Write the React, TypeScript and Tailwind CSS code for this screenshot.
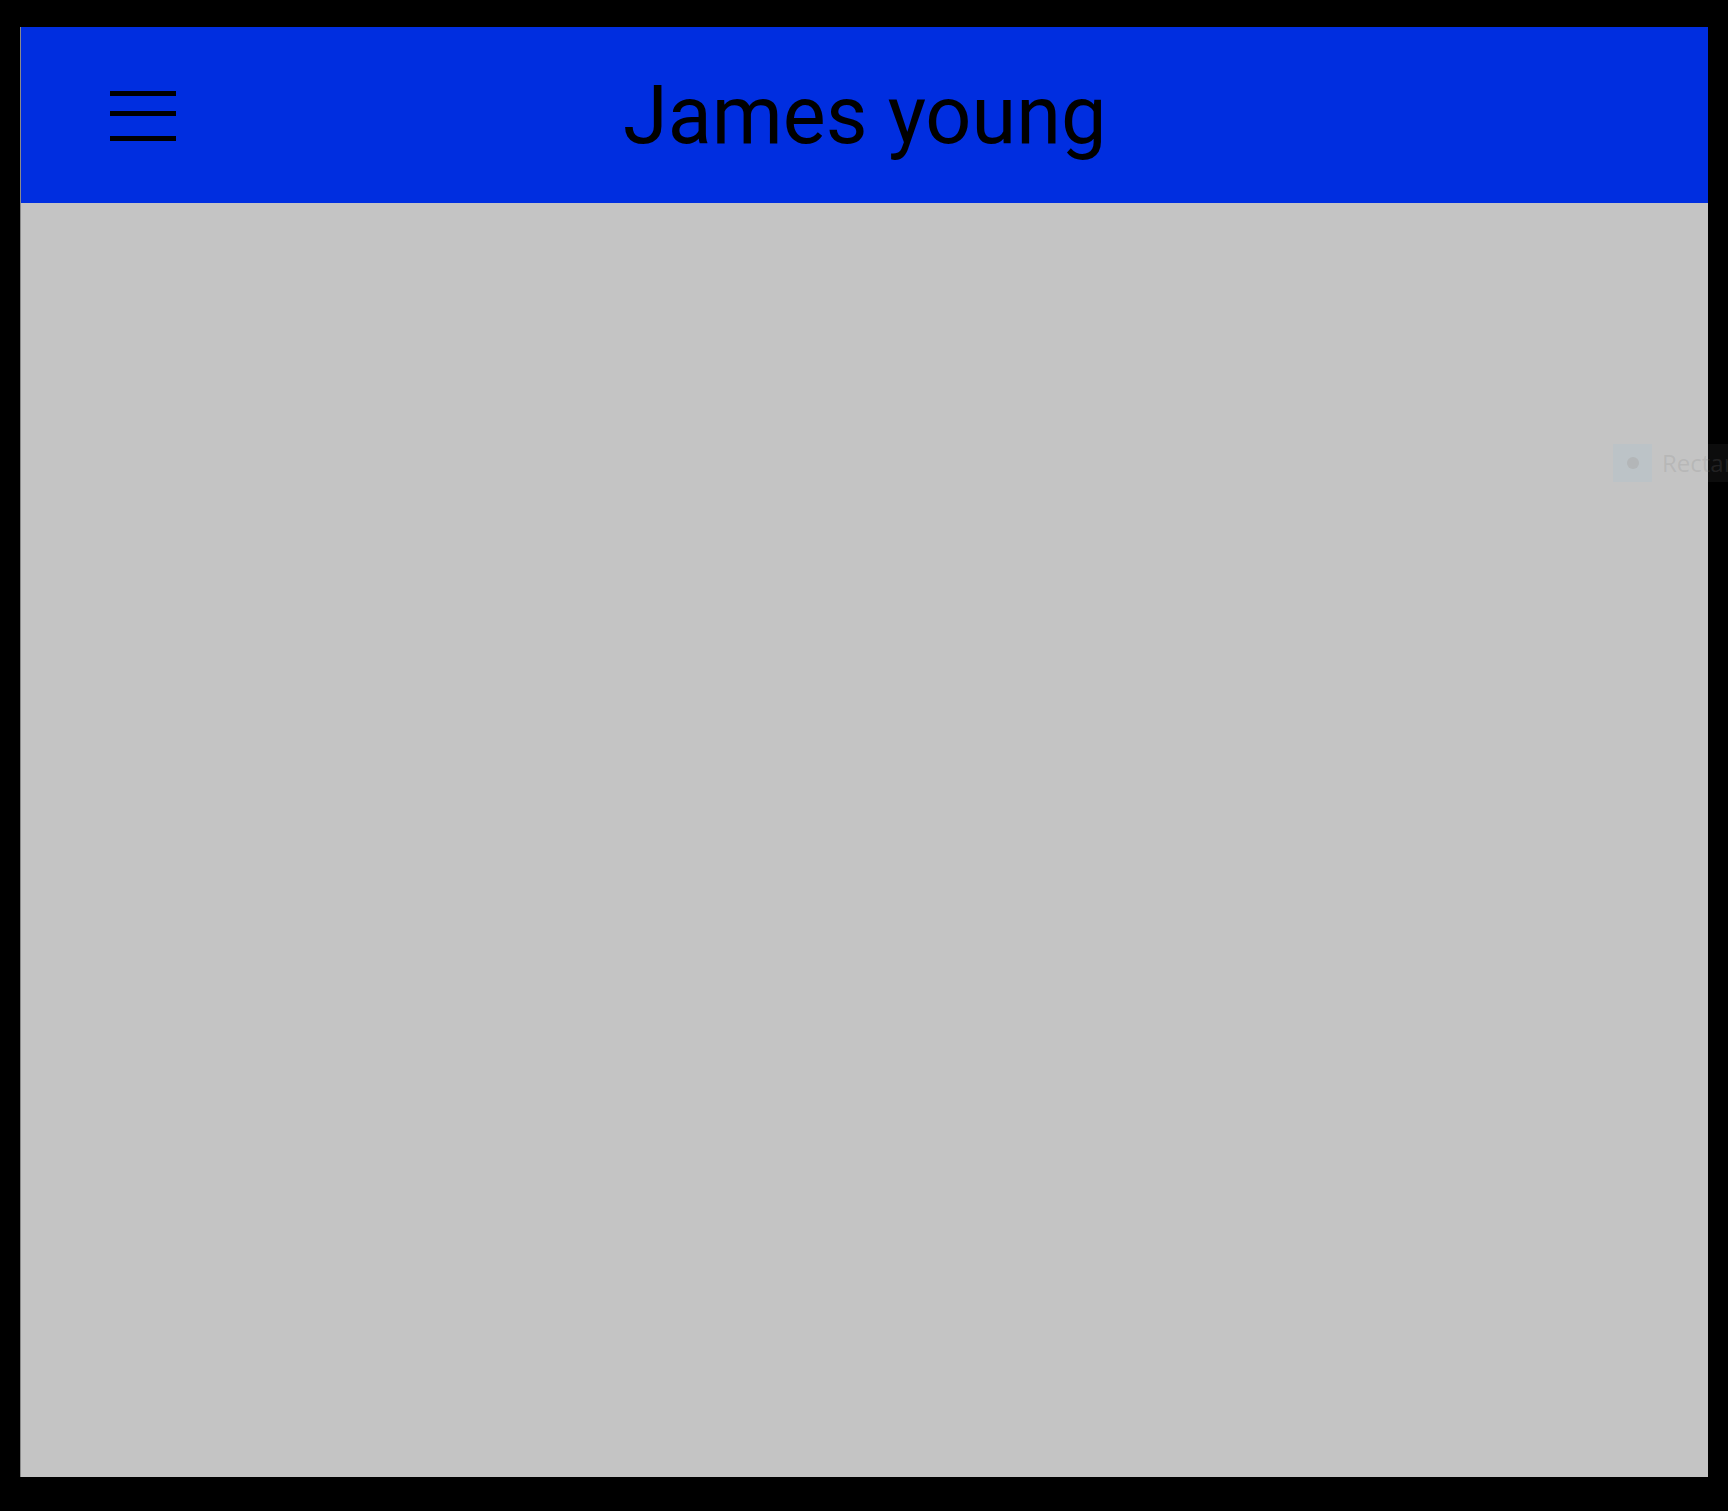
export default function App() {
  return (
    <div className="relative w-[1728px] h-[1511px] bg-black overflow-hidden" style={{ fontFamily: "Roboto, 'Liberation Sans', sans-serif" }}>
      <div className="absolute left-0 top-0 w-full h-full pl-[20px] pt-[27px]">
        <div className="w-[1688px] h-[1450px] flex flex-col bg-[#c4c4c4] border-l border-[#8a8a8a]">
          <header className="h-[176px] bg-[#002ee0] flex items-center shrink-0">
            <button className="ml-[89px] w-[66px] flex flex-col pt-[1px]">
              <span className="block h-[5px] bg-black" />
              <span className="block h-[5px] bg-black mt-[15px]" />
              <span className="block h-[5px] bg-black mt-[20px]" />
            </button>
            <h1 className="ml-[447px] text-[81px] leading-none text-black font-normal">James young</h1>
          </header>
          <main className="flex-1" />
        </div>
      </div>

      {/* faint layer tooltip */}
      <div className="absolute left-[1613px] top-[444px] h-[38px] flex items-center">
        <div className="w-[39px] h-[38px] bg-[#bcc3c7] flex items-center justify-center">
          <div className="w-[12px] h-[12px] rounded-full bg-[#b3b6b8]" />
        </div>
        <div
          className="h-[38px] w-[130px] bg-[#c4c4c4]/[0.06] pl-[10px] flex items-center text-[24px] text-[#808080]/20"
          style={{ fontFamily: "'Open Sans', sans-serif" }}
        >
          Rectangle
        </div>
      </div>
    </div>
  );
}
